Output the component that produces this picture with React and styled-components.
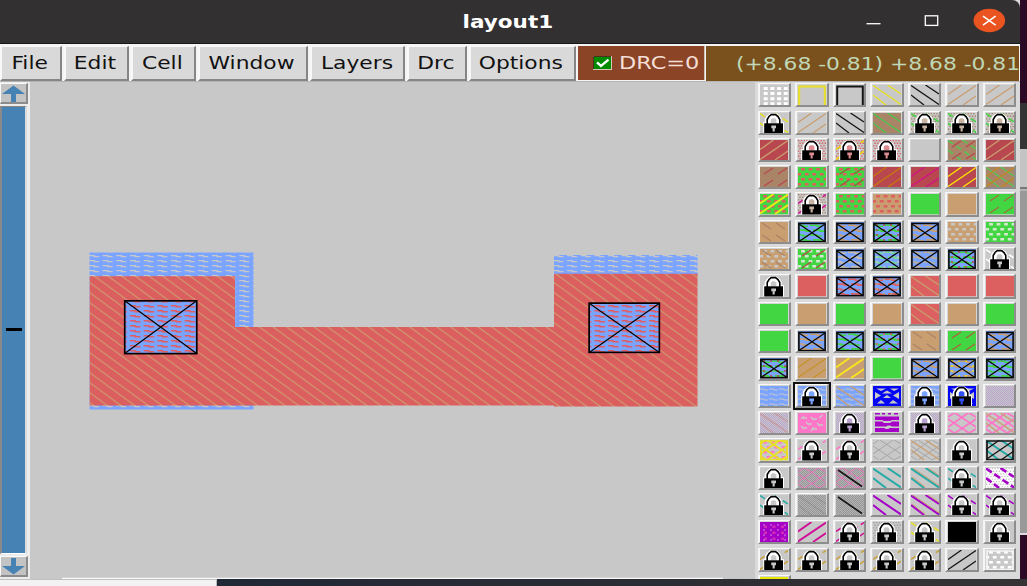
import React from "react";
import styled, { createGlobalStyle } from "styled-components";

const GlobalStyle = createGlobalStyle`
  * { box-sizing: border-box; }
  body { margin: 0; overflow: hidden; background: #2c0a25; font-family: "DejaVu Sans", sans-serif; }
`;

const Desktop = styled.div`
  width: 1027px;
  height: 586px;
  display: grid;
  grid-template-columns: 1020px 7px;
  grid-template-rows: 579px 7px;
  overflow: hidden;
`;

const Window = styled.div`
  display: flex;
  flex-direction: column;
  min-width: 0;
  overflow: hidden;
  background: #d9d9d9;
`;

const TitleBar = styled.header`
  height: 44px;
  flex: none;
  display: grid;
  grid-template-columns: 1fr auto 1fr;
  align-items: center;
  background: #333031;
  border-bottom: 1px solid #181717;
  border-top-right-radius: 8px;
`;

const Title = styled.h1`
  grid-column: 2;
  margin: 0;
  font-size: 17.5px;
  line-height: 43px;
  font-weight: bold;
  color: #fff;
  transform: translate(-2px, 1px) scaleX(1.23);
`;

const WindowControls = styled.div`
  justify-self: end;
  display: flex;
  height: 43px;
`;

const MenuBar = styled.nav`
  height: 38px;
  flex: none;
  display: flex;
  gap: 2px;
  padding-top: 2px;
  background: #f4f4f4;
  border-bottom: 1px solid #b4b4b4;
`;

const MenuButton = styled.button`
  width: ${(p) => p.$w}px;
  height: 35px;
  flex: none;
  padding: 0 2px 0 0;
  display: flex;
  align-items: center;
  justify-content: center;
  background: #d9d9d9;
  border: 0 solid;
  border-width: 1px 2px 2px 2px;
  border-color: #f8f8f8 #858585 #858585 #f8f8f8;
  border-radius: 0;
  color: #111;
  font: 17.5px "DejaVu Sans", sans-serif;
`;

const Wide = styled.span`
  display: inline-block;
  white-space: nowrap;
  transform: scaleX(${(p) => p.$stretch || 1.245});
  transform-origin: ${(p) => p.$origin || "center"};
`;

const DrcStatus = styled.div`
  width: 127px;
  height: 34px;
  flex: none;
  display: flex;
  align-items: center;
  padding-left: 15px;
  gap: 7px;
  color: #f5dfd8;
  background: #8b4526;
  border-right: 1px solid #cfc0b4;
  font-size: 17.5px;
`;

const Coordinates = styled.div`
  flex: 1;
  min-width: 0;
  height: 35px;
  margin: 0 1px 0 -1px;
  padding-left: 30px;
  display: flex;
  align-items: center;
  overflow: hidden;
  color: #c0d8b8;
  background: #7a511c;
  font-size: 17.5px;
`;

const Workspace = styled.main`
  flex: 1;
  min-height: 0;
  display: grid;
  grid-template-columns: 30px 725px 265px;
`;

const Scrollbar = styled.aside`
  display: flex;
  flex-direction: column;
  gap: 2px;
  padding: 1px 2px 2px 0;
  background: #ececec;
`;

const ArrowButton = styled.button`
  height: 21px;
  width: 28px;
  flex: none;
  padding: 0;
  display: grid;
  place-items: center;
  background: #c3c3c3;
  border: 1px solid;
  border-width: 1px 2px 2px 1px;
  border-color: #fafafa #8b8b8b #8b8b8b #fafafa;
`;

const Trough = styled.div`
  flex: 1;
  width: 27px;
  display: flex;
  align-items: center;
  justify-content: center;
  background: #4682b4;
  border: solid;
  border-width: 1px 2px 1px 2px;
  border-color: #858585 #dcdcdc #fff #8a8a8a;
`;

const Thumb = styled.div`
  width: 16px;
  height: 3px;
  margin-bottom: 2px;
  background: #000;
`;

const Canvas = styled.svg`
  display: block;
  width: 725px;
  height: 497px;
  background: #c8c8c8;
`;

const Palette = styled.section`
  display: grid;
  grid-template-columns: repeat(7, 33.6px);
  grid-auto-rows: 24.3px;
  column-gap: 3.95px;
  row-gap: 3.03px;
  padding: 1.2px 0 0 2.5px;
  overflow: hidden;
  background: #dadada;
`;

const Swatch = styled.button`
  width: 33.6px;
  height: 24.3px;
  padding: 1px 0 0 0.4px;
  display: block;
  line-height: 0;
  background: #d4d4d4;
  border: solid;
  border-width: 1px 2px 2px 2px;
  border-color: #f8f8f8 #8d8d8d #8d8d8d #f5f5f5;
  outline: ${(p) => (p.$selected ? "2px solid #111" : "none")};
`;

const Backdrop = styled.div`
  height: 579px;
  background: linear-gradient(
    to bottom,
    #2c0a25 0 103px, #343434 103px 149px, #c4c4c4 149px 187px,
    #777 187px 189px, #b4b4b4 189px 191px, #999 191px 533px,
    #ddd 533px 535px, #2c0a25 535px
  );
`;

const BottomStrip = styled.footer`
  grid-column: 1 / -1;
  display: grid;
  grid-template-columns: 217px 1fr;
`;

const StripLight = styled.div`
  background: #f2f2f2;
  border-top: 1px solid #c0c0c0;
  border-right: 1px solid #bbb;
`;

const StripDark = styled.div`
  background: linear-gradient(to right, #212836, #2b2d34 55%, #353334);
`;

const G = "#42d642";
const T = "#c99e70";
const R = "#dc6060";
const M = "#b8474f";
const Br = "#a98467";
const B = "#7ba4ff";
const Y = "#e8e022";
const N = "#c8c8c8";
const K = "#151515";
const P = "#a600c8";
const PK = "#ff75c8";
const LV = "#baa2cf";
const TL = "#27aaa5";
const MG = "#d01098";
const GD = "#c9a03a";
const W = "#ffffff";

const BACK = "M0 .5L28 19.5M14.5 0L28 9M0 10L13 20";
const SLASH = "M0 9.5L13.5 0M0 19.5L28 .5M15 20L28 11";

const Lines = ({ d, c, w = 1.3, dash }) => (
  <path d={d} stroke={c} strokeWidth={w} fill="none" strokeDasharray={dash} />
);

function grid(cols, rows, fn) {
  const out = [];
  for (let r = 0; r < rows; r++) for (let c = 0; c < cols; c++) out.push(fn(c, r));
  return out.join("");
}

const DOTS = grid(4, 4, (c, r) => `M${3.7 + c * 6.7} ${2 + r * 5.1}h4v3h-4z`);
const STAGGER = grid(4, 4, (c, r) => `M${1.3 + c * 7.5 - (r % 2) * 3.8 + 1.8} ${1 + r * 5}h3.8v2.6h-3.8z`);
const CHECKER = grid(10, 8, (c, r) => `M${c * 2.8 + (r % 2) * 1.4} ${r * 2.6}h1.4v1.3h-1.4z`);
const FINE = grid(14, 20, (c, r) => `M${c * 2 + (r % 2)} ${r}h1v1h-1z`);
const WAVES = grid(3, 4, (c, r) => `M${c * 10 - 1} ${3 + r * 5}h5v1h4`);
const STREAKS = grid(2, 4, (c, r) => `M${c * 14 - 2 + (r % 2) * 3} ${3.2 + r * 4.9}h7v1h5`);
const FLECKS = grid(4, 4, (c, r) => `M${3 + c * 7} ${3 + r * 5}h2`);
const LATTICE = "M0 4L6 0M0 14L20 0M7 20L28 6M21 20L28 16M7 0L28 14M0 6L21 20M0 16L6 20M21 0L28 4";

const marks = {
  bs: (c) => <Lines d={BACK} c={c} />,
  sl: (c) => <Lines d={SLASH} c={c} />,
  bsThick: (c) => <Lines d={BACK} c={c} w={2} />,
  slThick: (c) => <Lines d={SLASH} c={c} w={1.9} />,
  bsShift: (c) => <g transform="translate(1.3 -.8)"><Lines d={BACK} c={c} w={1} /></g>,
  bsDash: (c) => <Lines d="M2 1L11 7M16 1L25 7M2 13L11 19M16 13L25 19" c={c} />,
  slDash: (c) => <Lines d="M4 7L13 1M18 7L27 1M4 19L13 13M18 19L27 13" c={c} />,
  slChop: (c) => <Lines d={SLASH} c={c} w={1.5} dash="6 4" />,
  bsChop: (c) => <Lines d={BACK} c={c} w={1.5} dash="6 4" />,
  bsChopThick: (c) => <Lines d={BACK} c={c} w={2.6} dash="7 3" />,
  one: (c) => <Lines d="M2 2L26 18.5" c={c} w={1.6} />,
  dots: (c) => <path d={DOTS} fill={c} />,
  stag: (c) => <path d={STAGGER} fill={c} />,
  check: (c) => <path d={CHECKER} fill={c} />,
  fine: (c) => <path d={FINE} fill={c} />,
  lattice: (c) => <Lines d={LATTICE} c={c} w={1} />,
  latticeThick: (c) => <Lines d={LATTICE} c={c} w={1.8} />,
  waves: (c) => <Lines d={WAVES} c={c} w={1} />,
  streaks: (c) => <Lines d={STREAKS} c={c} w={1.6} />,
  flecks: (c) => <Lines d={FLECKS} c={c} w={1.7} />,
  frame: (c) => <Lines d="M1.2 20V1.4H26.8V20" c={c} w={2} />,
  box: (c) => <Lines d="M1 1H27V19.5H1z" c={c} w={1.7} />,
  cross: () => (
    <g>
      <rect x=".9" y="1.4" width="26.2" height="18.3" fill="none" stroke="#080808" strokeWidth="1.6" />
      <Lines d="M1 2L27 19.5M27 2L1 19.5" c="#080808" w={1.3} />
    </g>
  ),
  bowties: (c) => (
    <path d="M3 2.5L8 5L13 2.5zM17 2.5L21 5L26 2.5zM9 7.5L14 4.5L19 7.5zM2 6V13L8 9.5zM26 6V13L20 9.5zM10 12L14 9L18 12zM4 17.5L8 14L12 17.5zM16 17.5L20 14L25 17.5z" fill={c} />
  ),
  bars: (c) => <path d="M2 0H7V1.5H2zM9 0H12V1.5H9zM15 0H18V1.5H15zM21 0H25V1.5H21zM2 3.5H26V7H19L17 8H11L9 7H2zM2 8.5H9L11 10H17L19 8.5H26V13.5H19L17 12.5H15L13 13.5H2zM2 15H11L13 16H15L17 15H26V19H2z" fill={c} />,
  tees: (c) => <path d="M3 6L6 3M5 5H9M13 4L16 7M15 6H19M21 5L25 2M8 9L11 12M10 11H14M19 10L22 13M21 12H25M3 13L6 16M5 15H9M13 18L16 14M15 16H19" stroke={c} strokeWidth="1.5" fill="none" />,
  spots: (c) => <path d={grid(3, 3, (col, r) => `M${4 + col * 8.5} ${3.5 + r * 6}h3v2.6h-3z`)} fill={c} />,
  lock: (c) => (
    <g>
      <path d="M3.2 20.5V9.3H4.8V6L6.6 3L9.8 .4H16.6L20 3L21.7 6V9.3H24V20.5z" fill="#fff" />
      <path d="M10.8 10.3V6.6L12.3 5.3H14.8L16.4 6.6V10.3z" fill={c || N} />
      <path d="M7.2 11V6.5L9 3.5L11.3 1.6H15.6L18 3.5L19.8 6.5V11" fill="none" stroke="#000" strokeWidth="1.6" />
      <rect x="4.2" y="10.3" width="18.8" height="10.2" fill="#000" />
      <path d="M11.3 12.6H16V15.2H14.7V18.4H12.6V15.2H11.3z" fill={c || "#c8c8c8"} />
    </g>
  ),
};

const X = (c, extra) => [B, ["streaks", c], ...(extra ? [["flecks", extra]] : []), ["cross"]];
const L = (...m) => [N, ...m, ["lock"]];
const LC = (c, tint, ...m) => [N, ["check", c], ...m, ["lock", tint]];

const layers = [
  [N, ["dots", W]], [N, ["frame", Y]], [N, ["frame", K]], [N, ["bs", Y]], [N, ["bs", K]], [N, ["sl", T]], [N, ["sl", T]],
  L(["bsChop", Y]), [N, ["sl", T]], [N, ["bs", K]], [Br, ["bs", "#48c850"]],
  LC(Br, "#c9b4a4", ["bsChop", G]), LC(Br, "#c9b4a4", ["bsChop", G]), LC(Br, "#c9b4a4", ["bsChop", G]),
  [M, ["sl", T]], LC(R, "#dc8c90"), LC(R, "#dc8c90", ["slChop", "#f2d000"]), LC(R, "#dc8c90"), [N], [Br, ["bsChop", "#50c850"], ["slDash", M]], [M, ["sl", T]],
  [Br, ["slDash", M]], [G, ["stag", R]], [G, ["stag", R], ["slDash", "#a05540"]], [M, ["sl", "#c8780c"]], [M, ["sl", "#d4108c"]], [M, ["sl", "#ffe600"]], [Br, ["bs", "#55c85a"], ["sl", "#bf8a20"]],
  [G, ["stag", R], ["slThick", "#e4ed18"]], LC(Br, "#c9b4a4", ["slChop", MG]), [G, ["stag", R]], [T, ["stag", R]], [G], [T], [G, ["slDash", "#a07040"]],
  [T, ["bsDash", Br]], X(G), X(T), X(G, M), X(T), [T, ["stag", N]], [G, ["stag", "#d4e8d0"]],
  [T, ["stag", N], ["bsDash", Br]], [G, ["stag", "#d4e8d0"], ["slDash", M]], X("#c8bda8"), X("#78dc90", N), X("#b9ad9c"), X(G, M), L(["bsChop", W]),
  [N, ["lock"]], [R], X(R), X(R, T), [R, ["bs", T]], [R], [R],
  [G], [T], [G], [T], [R, ["bs", T]], [T], [G],
  [G], X(T), X(G), X(G, R), [T, ["bsDash", Br]], [G, ["slDash", "#b06040"]], X(T),
  X(G, M), [T, ["sl", "#c3942a"]], [T, ["slThick", "#f5e520"]], [G], X(T), X(T, Y), X(G),
  [B, ["waves", N]], [B, ["waves", N], ["lock", B]], [B, ["waves", N], ["bs", T]], ["#0505f5", ["bowties", N]], [B, ["waves", N], ["lock", B]], ["#0505f5", ["bowties", N], ["lock", "#3050ff"]], [N, ["fine", LV]],
  [N, ["fine", LV], ["bs", "#c79999"]], [PK, ["tees", N]], [N, ["fine", LV], ["lock", LV]], [N, ["bars", P]], [N, ["fine", LV], ["lock", LV]], [N, ["latticeThick", PK]], [N, ["latticeThick", PK], ["bs", T]],
  [N, ["stag", PK], ["latticeThick", Y], ["box", Y]], L(["slChop", PK]), L(["slChop", PK]), [N, ["lattice", "#a6a6a6"]], [N, ["lattice", "#a6a6a6"], ["bs", T]], [N, ["lock"]], [N, ["bsThick", TL], ["sl", K], ["box", K]],
  [N, ["lock"]], ["#b4b4b4", ["fine", "#969696"], ["lattice", "#ed70bd"]], ["#b4b4b4", ["fine", "#969696"], ["lattice", "#ed70bd"], ["one", K]], [N, ["bsThick", TL]], [N, ["bsThick", TL], ["bsShift", T]], L(["bsChop", TL]), [W, ["check", N], ["bsChopThick", P]],
  L(["bsChop", TL]), ["#b4b4b4", ["fine", "#969696"], ["bs", "#969696"]], ["#b4b4b4", ["fine", "#969696"], ["one", K]], [N, ["bsThick", P]], [N, ["bsThick", P], ["bsShift", T]], L(["bsChop", P]), L(["bsChop", P]),
  [P, ["spots", "#d02cb8"], ["flecks", "#c060dc"]], [N, ["slThick", MG]], L(["slChop", MG]), LC("#a0a0a0", N), L(["bsChop", Y]), ["#000"], [N, ["lock"]],
  L(["slChop", GD]), L(["slChop", GD]), L(["slChop", GD]), L(["slChop", GD]), L(["slChop", GD]), [N, ["sl", K]], [N, ["stag", W], ["box", "#f4f4f4"]],
  ["#e8e800"],
];

const SELECTED = 78;

function LayerIcon({ layer }) {
  const [bg, ...parts] = layer;
  return (
    <svg width="28" height="20.3" viewBox="0 0 28 20.3">
      <rect width="28" height="20.3" fill={bg} />
      {parts.map(([kind, color], i) => (
        <React.Fragment key={i}>{marks[kind](color)}</React.Fragment>
      ))}
    </svg>
  );
}

function Contact({ x, y, w, h }) {
  return (
    <g stroke="#000">
      <rect x={x} y={y} width={w} height={h} fill={B} />
      <rect x={x} y={y} width={w} height={h} fill="url(#waveRed)" strokeWidth="1.6" />
      <path d={`M${x} ${y}l${w} ${h}M${x + w} ${y}l${-w} ${h}`} strokeWidth="1.2" />
    </g>
  );
}

function LayoutCanvas() {
  return (
    <Canvas viewBox="30 82 725 497">
      <defs>
        <pattern id="wave" x="89" y="253" width="13.66" height="5" patternUnits="userSpaceOnUse">
          <rect width="13.66" height="5" fill={B} />
          <path d="M0 2H6V3.3H0zM4.5 3H10V4.3H4.5z" fill="#c8c8c8" />
        </pattern>
        <pattern id="waveRed" x="89" y="253" width="13.66" height="5" patternUnits="userSpaceOnUse">
          <path d="M0 2H6V3.6H0zM4.5 3H10.5V4.6H4.5z" fill="#e05c60" />
        </pattern>
        <pattern id="hatch" x="556" y="274" width="13.66" height="10" patternUnits="userSpaceOnUse">
          <rect width="13.66" height="10" fill="#dc5f5f" />
          <path d="M-1.366 -1L15.03 11M-1.366 9L1.366 11M12.29 -1L15.03 1" stroke="#cf9870" strokeWidth="1.15" />
        </pattern>
      </defs>
      <rect x="89.5" y="252.5" width="164" height="157" fill="url(#wave)" />
      <rect x="554" y="255" width="143.5" height="20" fill="url(#wave)" />
      <path d="M89.7 276.3H235V327H554V273.7H697.5V406.5H554V405.5H89.7z" fill="url(#hatch)" />
      <Contact x={124.7} y={300.8} w={72} h={52.8} />
      <Contact x={589.2} y={303.2} w={70.2} h={49.2} />
      <path d="M62 578.4H723" stroke="#f8f8f8" strokeWidth="1.3" />
    </Canvas>
  );
}

const menus = [
  ["File", 62], ["Edit", 64.5], ["Cell", 65], ["Window", 110.5], ["Layers", 95], ["Drc", 60], ["Options", 106.5],
];

export default function App() {
  return (
    <>
      <GlobalStyle />
      <Desktop>
        <Window>
          <TitleBar>
            <Title>layout1</Title>
            <WindowControls>
              <svg width="170" height="43" viewBox="850 0 170 43">
                <path d="M866.5 23.7H880.5" stroke="#fff" strokeWidth="1.3" />
                <rect x="925.3" y="15.8" width="12.4" height="9.6" fill="none" stroke="#fff" strokeWidth="1.3" />
                <ellipse cx="989.3" cy="20.5" rx="15.8" ry="11.7" fill="#e95420" />
                <path d="M983 16.2L995.6 25.2M995.6 16.2L983 25.2" stroke="#fff" strokeWidth="1.6" />
              </svg>
            </WindowControls>
          </TitleBar>
          <MenuBar>
            {menus.map(([label, w]) => (
              <MenuButton key={label} $w={w}><Wide>{label}</Wide></MenuButton>
            ))}
            <DrcStatus>
              <svg width="19" height="14" viewBox="0 0 19 14">
                <rect x=".5" y=".5" width="18" height="13" fill="#008a00" stroke="#d8c8b8" />
                <path d="M.5 13V.5H18" fill="none" stroke="#49341c" />
                <path d="M4 6.4L8 10L15.5 3.7" fill="none" stroke="#fff" strokeWidth="2.4" />
              </svg>
              <Wide $origin="left" $stretch={1.28}>DRC=0</Wide>
            </DrcStatus>
            <Coordinates><Wide $origin="left">(+8.68 -0.81) +8.68 -0.81</Wide></Coordinates>
          </MenuBar>
          <Workspace>
            <Scrollbar>
              <ArrowButton aria-label="Scroll up">
                <svg width="23" height="17" viewBox="0 0 23 17"><path d="M11.5 .5L23 9H14V17H9V9H0z" fill="#4682b4" /></svg>
              </ArrowButton>
              <Trough><Thumb /></Trough>
              <ArrowButton aria-label="Scroll down">
                <svg width="23" height="17" viewBox="0 0 23 17"><path d="M11.5 16.5L23 8H14V0H9V8H0z" fill="#4682b4" /></svg>
              </ArrowButton>
            </Scrollbar>
            <LayoutCanvas />
            <Palette>
              {layers.map((layer, i) => (
                <Swatch key={i} $selected={i === SELECTED}><LayerIcon layer={layer} /></Swatch>
              ))}
            </Palette>
          </Workspace>
        </Window>
        <Backdrop />
        <BottomStrip>
          <StripLight />
          <StripDark />
        </BottomStrip>
      </Desktop>
    </>
  );
}
